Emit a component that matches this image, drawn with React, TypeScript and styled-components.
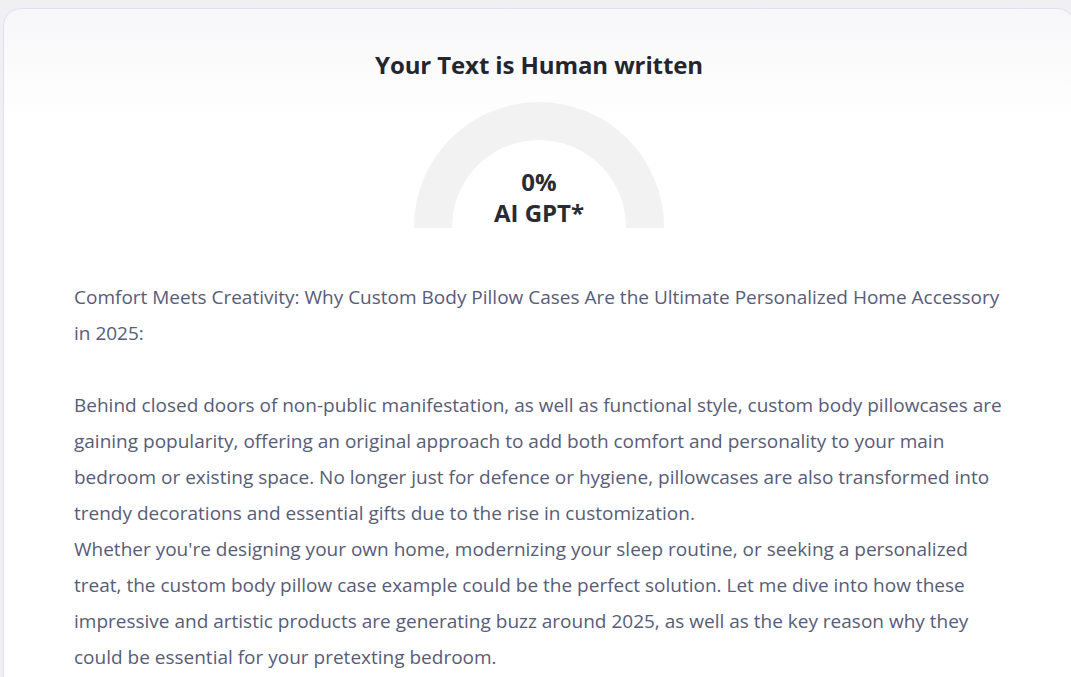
import styled, { createGlobalStyle } from "styled-components";

const GlobalStyle = createGlobalStyle`
  html, body {
    margin: 0;
    padding: 0;
    background: #f0f0f2;
    font-family: "Open Sans", "Noto Sans", sans-serif;
    overflow-x: hidden;
  }
`;

const Card = styled.section`
  box-sizing: border-box;
  width: calc(100% + 1px);
  margin: 8px 0 0 3px;
  min-height: 700px;
  padding: 40px 64px 0 70px;
  border: 1px solid #dfe1f3;
  border-radius: 18px;
  background: linear-gradient(180deg, #f7f7f9 0px, #fbfbfc 60px, #ffffff 110px);
  display: flex;
  flex-direction: column;
  align-items: center;
`;

const Title = styled.h1`
  margin: 0 6px 0 0;
  font-size: 24px;
  line-height: 32px;
  font-weight: 700;
  color: #24252e;
  letter-spacing: -0.1px;
`;

const Gauge = styled.div`
  box-sizing: border-box;
  width: 250px;
  height: 126px;
  margin: 21px 6px 0 0;
  border: 38px solid #f2f2f2;
  border-bottom: none;
  border-radius: 125px 125px 0 0;
  display: flex;
  flex-direction: column;
  justify-content: flex-end;
  align-items: center;
`;

const GaugeLabel = styled.span`
  font-size: 24px;
  line-height: 31px;
  font-weight: 700;
  color: #2a2b33;
`;

const Body = styled.div`
  align-self: stretch;
  margin-top: 51px;
`;

const Para = styled.p<{ $gap?: boolean }>`
  margin: ${(p) => (p.$gap ? "0 0 36px" : "0")};
  font-size: 19px;
  line-height: 36px;
  color: #585c78;
`;

export default function App() {
  return (
    <>
      <GlobalStyle />
      <Card>
        <Title>Your Text is Human written</Title>
        <Gauge>
          <GaugeLabel>0%</GaugeLabel>
          <GaugeLabel>AI GPT*</GaugeLabel>
        </Gauge>
        <Body>
          <Para $gap>
            Comfort Meets Creativity: Why Custom Body Pillow Cases Are the
            Ultimate Personalized Home Accessory in 2025:
          </Para>
          <Para>
            Behind closed doors of non-public manifestation, as well as
            functional style, custom body pillowcases are gaining popularity,
            offering an original approach to add both comfort and personality
            to your main bedroom or existing space. No longer just for defence
            or hygiene, pillowcases are also transformed into trendy
            decorations and essential gifts due to the rise in customization.
          </Para>
          <Para>
            Whether you're designing your own home, modernizing your sleep
            routine, or seeking a personalized treat, the custom body pillow
            case example could be the perfect solution. Let me dive into how
            these impressive and artistic products are generating buzz around
            2025, as well as the key reason why they could be essential for
            your pretexting bedroom.
          </Para>
        </Body>
      </Card>
    </>
  );
}
